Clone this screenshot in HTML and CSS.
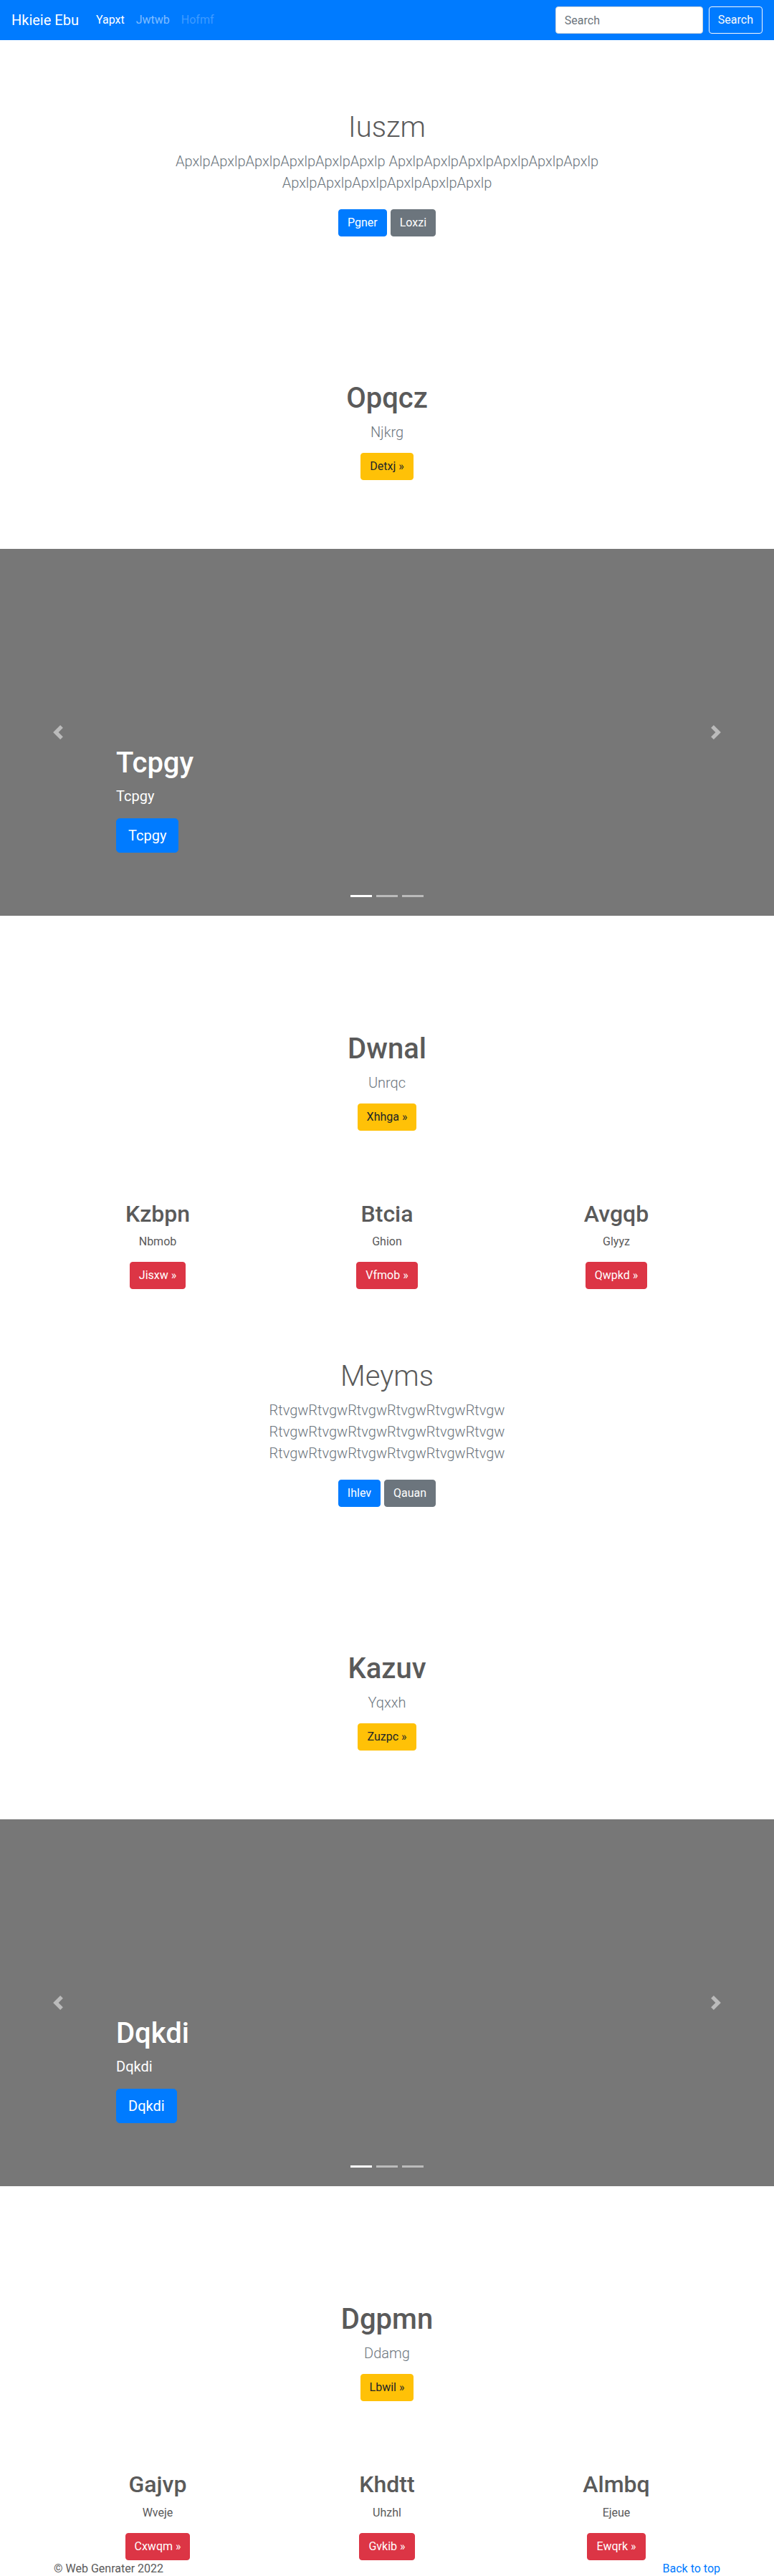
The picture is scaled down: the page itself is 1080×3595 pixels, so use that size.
FILE: index.html
```html
<!DOCTYPE html>
<html lang="en">
<head>
<meta charset="utf-8">
<title>Hkieie Ebu</title>
<link rel="stylesheet" href="styles.css">
</head>
<body>
<nav class="navbar">
  <a class="brand" href="#">Hkieie Ebu</a>
  <ul class="nav-links">
    <li><a class="nav-link active" href="#">Yapxt</a></li>
    <li><a class="nav-link" href="#">Jwtwb</a></li>
    <li><a class="nav-link disabled" href="#">Hofmf</a></li>
  </ul>
  <form class="search">
    <input class="search-input" type="text" placeholder="Search">
    <button class="btn btn-outline-light" type="button">Search</button>
  </form>
</nav>
<main>
  <section class="hero-a">
    <h1 class="title-light">Iuszm</h1>
    <p class="lead">ApxlpApxlpApxlpApxlpApxlpApxlp ApxlpApxlpApxlpApxlpApxlpApxlp ApxlpApxlpApxlpApxlpApxlpApxlp</p>
    <div class="actions actions-spaced">
      <a class="btn btn-primary" href="#">Pgner</a>
      <a class="btn btn-secondary" href="#">Loxzi</a>
    </div>
  </section>

  <section class="hero-b">
    <h1 class="title-bold">Opqcz</h1>
    <p class="lead">Njkrg</p>
    <div class="actions">
      <a class="btn btn-warning" href="#">Detxj &raquo;</a>
    </div>
  </section>

  <div class="carousel">
    <div class="carousel-caption">
      <h1>Tcpgy</h1>
      <p>Tcpgy</p>
      <div class="caption-actions"><a class="btn btn-lg btn-primary" href="#">Tcpgy</a></div>
    </div>
    <a class="carousel-control prev" href="#"><svg viewBox="0 0 8 8" width="20" height="20"><path fill="#fff" d="M5.25 0l-4 4 4 4 1.5-1.5-2.5-2.5 2.5-2.5-1.5-1.5z"/></svg></a>
    <a class="carousel-control next" href="#"><svg viewBox="0 0 8 8" width="20" height="20"><path fill="#fff" d="M2.75 0l-1.5 1.5 2.5 2.5-2.5 2.5 1.5 1.5 4-4-4-4z"/></svg></a>
    <ol class="indicators"><li class="active"></li><li></li><li></li></ol>
  </div>

  <section class="hero-b">
    <h1 class="title-bold">Dwnal</h1>
    <p class="lead">Unrqc</p>
    <div class="actions">
      <a class="btn btn-warning" href="#">Xhhga &raquo;</a>
    </div>
  </section>

  <div class="features">
    <div class="feature">
      <h2>Kzbpn</h2>
      <p>Nbmob</p>
      <div class="actions"><a class="btn btn-danger" href="#">Jisxw &raquo;</a></div>
    </div>
    <div class="feature">
      <h2>Btcia</h2>
      <p>Ghion</p>
      <div class="actions"><a class="btn btn-danger" href="#">Vfmob &raquo;</a></div>
    </div>
    <div class="feature">
      <h2>Avgqb</h2>
      <p>Glyyz</p>
      <div class="actions"><a class="btn btn-danger" href="#">Qwpkd &raquo;</a></div>
    </div>
  </div>

  <section class="hero-a">
    <h1 class="title-light">Meyms</h1>
    <p class="lead">RtvgwRtvgwRtvgwRtvgwRtvgwRtvgw RtvgwRtvgwRtvgwRtvgwRtvgwRtvgw RtvgwRtvgwRtvgwRtvgwRtvgwRtvgw</p>
    <div class="actions actions-spaced">
      <a class="btn btn-primary" href="#">Ihlev</a>
      <a class="btn btn-secondary" href="#">Qauan</a>
    </div>
  </section>

  <section class="hero-b">
    <h1 class="title-bold">Kazuv</h1>
    <p class="lead">Yqxxh</p>
    <div class="actions">
      <a class="btn btn-warning" href="#">Zuzpc &raquo;</a>
    </div>
  </section>

  <div class="carousel">
    <div class="carousel-caption">
      <h1>Dqkdi</h1>
      <p>Dqkdi</p>
      <div class="caption-actions"><a class="btn btn-lg btn-primary" href="#">Dqkdi</a></div>
    </div>
    <a class="carousel-control prev" href="#"><svg viewBox="0 0 8 8" width="20" height="20"><path fill="#fff" d="M5.25 0l-4 4 4 4 1.5-1.5-2.5-2.5 2.5-2.5-1.5-1.5z"/></svg></a>
    <a class="carousel-control next" href="#"><svg viewBox="0 0 8 8" width="20" height="20"><path fill="#fff" d="M2.75 0l-1.5 1.5 2.5 2.5-2.5 2.5 1.5 1.5 4-4-4-4z"/></svg></a>
    <ol class="indicators"><li class="active"></li><li></li><li></li></ol>
  </div>

  <section class="hero-b">
    <h1 class="title-bold">Dgpmn</h1>
    <p class="lead">Ddamg</p>
    <div class="actions">
      <a class="btn btn-warning" href="#">Lbwil &raquo;</a>
    </div>
  </section>

  <div class="features">
    <div class="feature">
      <h2>Gajvp</h2>
      <p>Wveje</p>
      <div class="actions"><a class="btn btn-danger" href="#">Cxwqm &raquo;</a></div>
    </div>
    <div class="feature">
      <h2>Khdtt</h2>
      <p>Uhzhl</p>
      <div class="actions"><a class="btn btn-danger" href="#">Gvkib &raquo;</a></div>
    </div>
    <div class="feature">
      <h2>Almbq</h2>
      <p>Ejeue</p>
      <div class="actions"><a class="btn btn-danger" href="#">Ewqrk &raquo;</a></div>
    </div>
  </div>
</main>
<footer class="footer">
  <p>&copy; Web Genrater 2022</p>
  <p><a class="top-link" href="#">Back to top</a></p>
</footer>
</body>
</html>
```
FILE: styles.css
```css
* { box-sizing: border-box; }

body {
  margin: 0;
  font-family: "Segoe UI", Roboto, "Noto Sans", sans-serif;
  font-size: 16px;
  line-height: 1.5;
  color: #5a5a5a;
  background: #fff;
}

a { text-decoration: none; }

/* Navbar */
.navbar {
  display: flex;
  align-items: center;
  height: 56px;
  padding: 8px 16px;
  background: #007bff;
}
.brand {
  font-size: 20px;
  line-height: 30px;
  padding: 5px 0;
  margin-right: 16px;
  color: #fff;
}
.nav-links {
  display: flex;
  list-style: none;
  margin: 0;
  padding: 0;
  flex: 1;
}
.nav-link {
  display: block;
  padding: 8px;
  line-height: 24px;
  color: rgba(255, 255, 255, 0.5);
}
.nav-link.active { color: #fff; }
.nav-link.disabled { color: rgba(255, 255, 255, 0.25); }

.search {
  display: flex;
  align-items: center;
  gap: 8px;
}
.search-input {
  width: 206px;
  height: 38px;
  padding: 6px 12px;
  font-family: inherit;
  font-size: 16px;
  line-height: 24px;
  color: #495057;
  background: #fff;
  border: 1px solid #ced4da;
  border-radius: 4px;
}
.search-input::placeholder { color: #6c757d; }

/* Buttons */
.btn {
  display: inline-block;
  padding: 6px 12px;
  font-family: inherit;
  font-size: 16px;
  line-height: 24px;
  font-weight: 400;
  border: 1px solid transparent;
  border-radius: 4px;
  text-align: center;
  cursor: pointer;
}
.btn-lg {
  padding: 8px 16px;
  font-size: 20px;
  line-height: 30px;
  border-radius: 5px;
}
.btn-primary { background: #007bff; border-color: #007bff; color: #fff; }
.btn-secondary { background: #6c757d; border-color: #6c757d; color: #fff; }
.btn-warning { background: #ffc107; border-color: #ffc107; color: #212529; }
.btn-danger { background: #dc3545; border-color: #dc3545; color: #fff; }
.btn-outline-light { background: transparent; border-color: #f8f9fa; color: #f8f9fa; }

/* Hero sections */
.hero-a, .hero-b {
  text-align: center;
  padding: 98px 15px 96px;
}
.hero-a h1, .hero-b h1 {
  margin: 0 0 8px;
  font-size: 40px;
  line-height: 48px;
}
.title-light { font-weight: 300; }
.title-bold { font-weight: 500; }

.lead {
  margin: 0 auto 14px;
  font-size: 20px;
  line-height: 30px;
  font-weight: 300;
  color: #6c757d;
}
.hero-a .lead { max-width: 620px; }

.actions {
  display: flex;
  justify-content: center;
  gap: 5px;
}
.actions-spaced { padding: 8px 0; }

/* Carousel */
.carousel {
  position: relative;
  height: 512px;
  margin-bottom: 64px;
  background: #777;
  display: flex;
  flex-direction: column;
  justify-content: flex-end;
  padding: 0 15% 48px;
}
.carousel-caption {
  padding: 20px 0;
  color: #fff;
  text-align: left;
  position: relative;
  z-index: 2;
}
.carousel-caption h1 {
  margin: 0 0 8px;
  font-size: 40px;
  line-height: 48px;
  font-weight: 500;
}
.carousel-caption p {
  margin: 0 0 17px;
  font-size: 20px;
  line-height: 28px;
}
.caption-actions {
  display: flex;
  margin-bottom: 20px;
}
.carousel-control {
  position: absolute;
  top: 0;
  bottom: 0;
  width: 15%;
  display: flex;
  align-items: center;
  justify-content: center;
  opacity: 0.5;
  z-index: 1;
}
.carousel-control.prev { left: 0; }
.carousel-control.next { right: 0; }
.carousel-control svg { display: block; }

.indicators {
  position: absolute;
  left: 0;
  right: 0;
  bottom: 0;
  margin: 0 0 16px;
  padding: 0;
  list-style: none;
  display: flex;
  justify-content: center;
  z-index: 3;
}
.indicators li {
  width: 30px;
  height: 23px;
  margin: 0 3px;
  border-top: 10px solid transparent;
  border-bottom: 10px solid transparent;
  background: #fff;
  background-clip: padding-box;
  opacity: 0.5;
}
.indicators li.active { opacity: 1; }

/* Features */
.features {
  max-width: 960px;
  margin: 0 auto;
  padding-top: 1px;
  display: grid;
  grid-template-columns: repeat(3, 1fr);
}
.feature {
  padding: 0 15px;
  text-align: center;
}
.feature h2 {
  margin: 0 0 8px;
  font-size: 32px;
  line-height: 38.4px;
  font-weight: 500;
}
.feature p {
  margin: 0 12px 16px;
}

/* Footer */
.footer {
  max-width: 960px;
  margin: 0 auto;
  padding: 0 15px;
  display: flex;
  justify-content: space-between;
}
.footer p { margin: 0; }
.top-link { color: #007bff; }
```
